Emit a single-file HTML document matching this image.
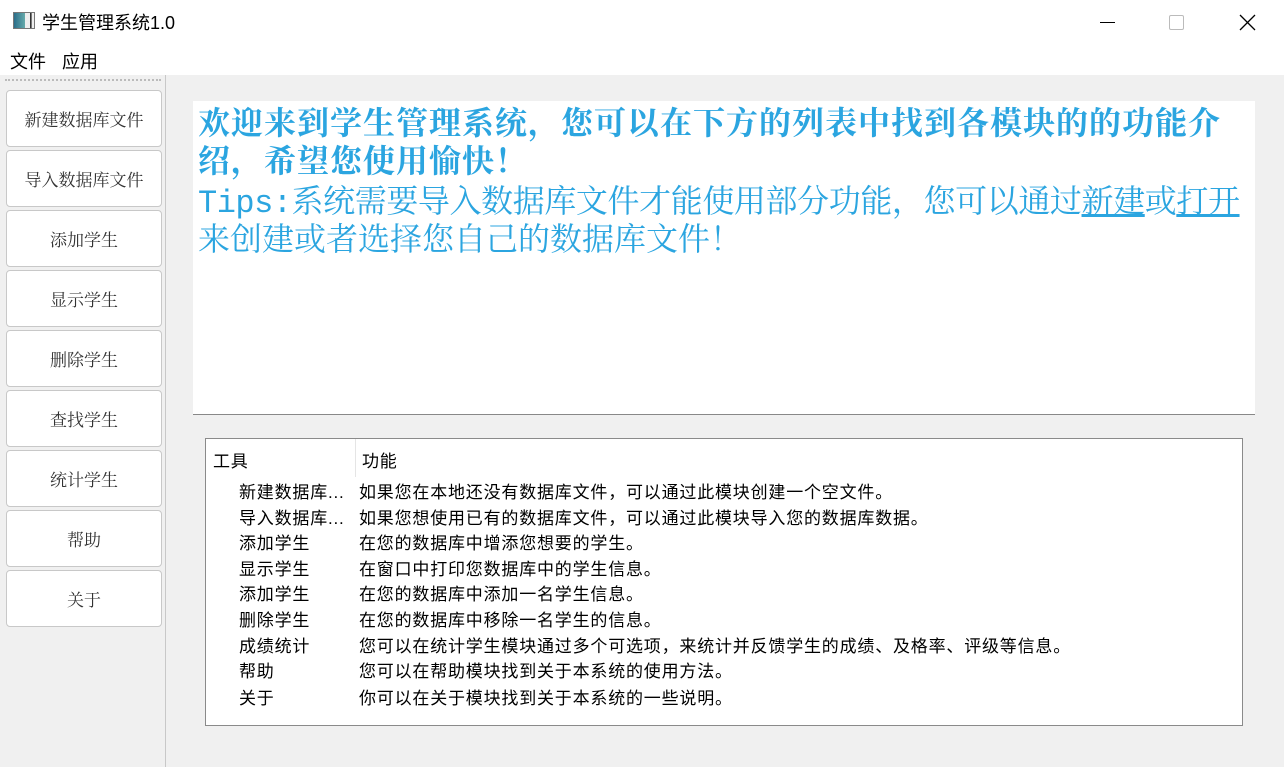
<!DOCTYPE html>
<html><head><meta charset="utf-8"><style>
*{margin:0;padding:0;box-sizing:border-box}
body{width:1284px;height:767px;overflow:hidden;background:#f0f0f0;position:relative;font-family:"Liberation Sans","Noto Sans CJK SC",sans-serif;}
.abs{position:absolute}
.title{left:0;top:0;width:1284px;height:40px;background:#fff}
.menu{left:0;top:40px;width:1284px;height:35px;background:#fff;font-size:18px;color:#000}
.btn{position:absolute;left:6px;width:156px;height:57px;background:#fff;border:1px solid #c8c8c8;border-radius:4px;font-family:"Noto Serif CJK SC",serif;font-size:17px;color:#333;text-align:center;line-height:55px}
.big{left:193px;top:101px;width:1062px;height:314px;background:#fff;border-bottom:1px solid #888;color:#2ba5e0;font-family:"Noto Serif CJK SC",serif;font-size:32px;}
.ln{position:absolute;left:5px;white-space:nowrap;letter-spacing:1px;line-height:38px}
.ln b{font-weight:bold}
.mono{font-family:"Liberation Mono",monospace;letter-spacing:-0.5px}
.tbl{left:205px;top:438px;width:1038px;height:288px;background:#fff;border:1px solid #8a8a8a;font-size:17px;color:#000}
.row{position:absolute;height:25px;white-space:nowrap;letter-spacing:0.8px}
</style></head><body>
<div class="abs title">
 <div class="abs" style="left:13px;top:12px;width:22px;height:17px;border:1px solid #777;background:linear-gradient(90deg,#2b6e8a 0,#6aa 55%,#eee 56%,#eee 80%,#333 81%,#333 88%,#eee 89%)"></div>
 <div class="abs" style="left:42px;top:9px;font-size:18px">学生管理系统1.0</div>
 <div class="abs" style="left:1100px;top:22px;width:15px;height:1px;background:#000"></div>
 <div class="abs" style="left:1169px;top:15px;width:15px;height:15px;border:1px solid #bbb;border-radius:2px"></div>
 <svg class="abs" style="left:1239px;top:14px" width="17" height="17"><path d="M1 1L16 16M16 1L1 16" stroke="#000" stroke-width="1.3"/></svg>
</div>
<div class="abs menu"><span class="abs" style="left:10px;top:8px">文件</span><span class="abs" style="left:62px;top:8px">应用</span></div>
<div class="abs" style="left:0;top:75px;width:166px;height:692px;border-right:1px solid #c8c8c8"></div>
<div class="abs" style="left:5px;top:79px;width:156px;border-top:2px dotted #bbb"></div>
<div class="btn" style="top:90px">新建数据库文件</div>
<div class="btn" style="top:150px">导入数据库文件</div>
<div class="btn" style="top:210px">添加学生</div>
<div class="btn" style="top:270px">显示学生</div>
<div class="btn" style="top:330px">删除学生</div>
<div class="btn" style="top:390px">查找学生</div>
<div class="btn" style="top:450px">统计学生</div>
<div class="btn" style="top:510px">帮助</div>
<div class="btn" style="top:570px">关于</div>
<div class="abs big">
 <div class="ln" style="top:1px"><b>欢迎来到学生管理系统，您可以在下方的列表中找到各模块的的功能介</b></div>
 <div class="ln" style="top:39px"><b>绍，希望您使用愉快！</b></div>
 <div class="ln" style="top:79px;letter-spacing:-0.4px"><span class="mono">Tips:</span>系统需要导入数据库文件才能使用部分功能，您可以通过<u>新建</u>或<u>打开</u></div>
 <div class="ln" style="top:117px;letter-spacing:0">来创建或者选择您自己的数据库文件！</div>
</div>
<div class="abs tbl">
 <div class="abs" style="left:149px;top:0;width:1px;height:38px;background:#e5e5e5"></div>
 <div class="row" style="left:7px;top:8px">工具</div>
 <div class="row" style="left:156px;top:8px">功能</div>
 <div class="row" style="left:33px;top:39px">新建数据库...</div><div class="row" style="left:153px;top:39px">如果您在本地还没有数据库文件，可以通过此模块创建一个空文件。</div>
 <div class="row" style="left:33px;top:65px">导入数据库...</div><div class="row" style="left:153px;top:65px">如果您想使用已有的数据库文件，可以通过此模块导入您的数据库数据。</div>
 <div class="row" style="left:33px;top:90px">添加学生</div><div class="row" style="left:153px;top:90px">在您的数据库中增添您想要的学生。</div>
 <div class="row" style="left:33px;top:116px">显示学生</div><div class="row" style="left:153px;top:116px">在窗口中打印您数据库中的学生信息。</div>
 <div class="row" style="left:33px;top:141px">添加学生</div><div class="row" style="left:153px;top:141px">在您的数据库中添加一名学生信息。</div>
 <div class="row" style="left:33px;top:167px">删除学生</div><div class="row" style="left:153px;top:167px">在您的数据库中移除一名学生的信息。</div>
 <div class="row" style="left:33px;top:193px">成绩统计</div><div class="row" style="left:153px;top:193px">您可以在统计学生模块通过多个可选项，来统计并反馈学生的成绩、及格率、评级等信息。</div>
 <div class="row" style="left:33px;top:218px">帮助</div><div class="row" style="left:153px;top:218px">您可以在帮助模块找到关于本系统的使用方法。</div>
 <div class="row" style="left:33px;top:245px">关于</div><div class="row" style="left:153px;top:245px">你可以在关于模块找到关于本系统的一些说明。</div>
</div>
</body></html>
